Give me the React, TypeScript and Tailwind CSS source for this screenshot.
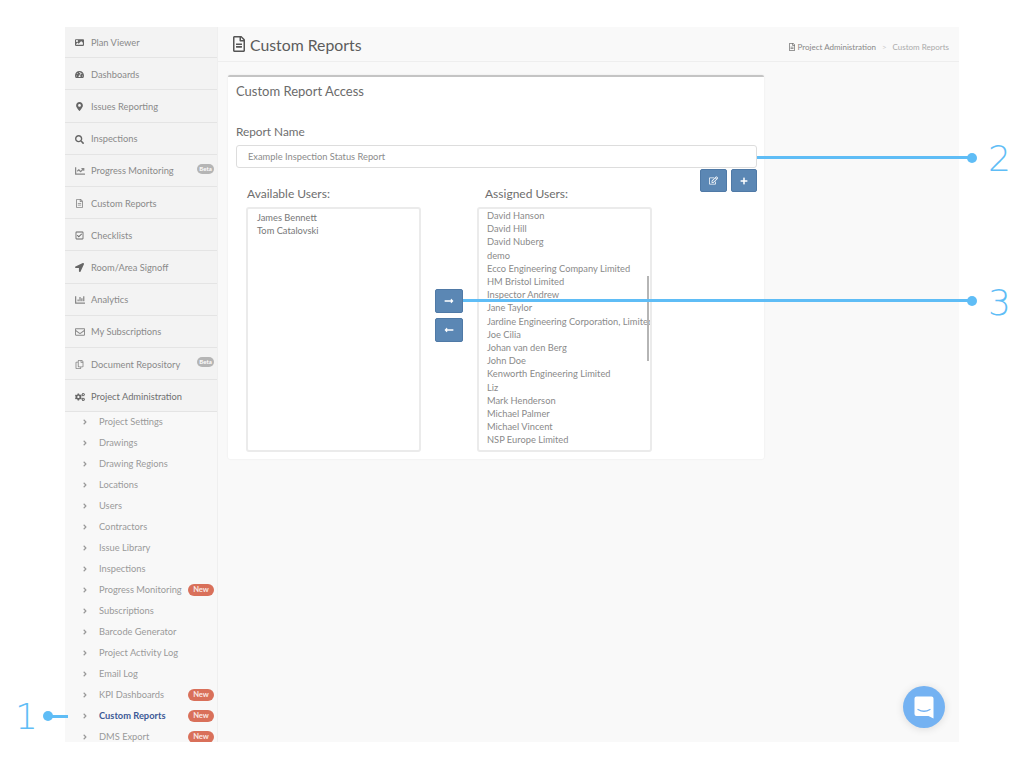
import type { ReactNode } from 'react';
import {
  FaImage,
  FaTachometerAlt,
  FaSearch,
  FaChartLine,
  FaRegFileAlt,
  FaRegCheckSquare,
  FaLocationArrow,
  FaChartBar,
  FaRegEnvelope,
  FaRegCopy,
  FaCogs,
  FaRegEdit,
  FaPlus,
  FaLongArrowAltRight,
  FaLongArrowAltLeft,
  FaAngleRight,
  FaMapMarkerAlt,
} from 'react-icons/fa';

const mainItems: { label: string; icon: ReactNode; beta?: boolean }[] = [
  { label: 'Plan Viewer', icon: <FaImage /> },
  { label: 'Dashboards', icon: <FaTachometerAlt /> },
  { label: 'Issues Reporting', icon: <FaMapMarkerAlt /> },
  { label: 'Inspections', icon: <FaSearch /> },
  { label: 'Progress Monitoring', icon: <FaChartLine className="text-[10px] text-[#888]" />, beta: true },
  { label: 'Custom Reports', icon: <FaRegFileAlt className="text-[#888]" /> },
  { label: 'Checklists', icon: <FaRegCheckSquare /> },
  { label: 'Room/Area Signoff', icon: <FaLocationArrow /> },
  { label: 'Analytics', icon: <FaChartBar className="text-[10px] text-[#888]" /> },
  { label: 'My Subscriptions', icon: <FaRegEnvelope className="text-[10px] text-[#888]" /> },
  { label: 'Document Repository', icon: <FaRegCopy className="text-[#888]" />, beta: true },
  { label: 'Project Administration', icon: <FaCogs className="text-[10px]" /> },
];

const subItems: { label: string; isNew?: boolean; active?: boolean }[] = [
  { label: 'Project Settings' },
  { label: 'Drawings' },
  { label: 'Drawing Regions' },
  { label: 'Locations' },
  { label: 'Users' },
  { label: 'Contractors' },
  { label: 'Issue Library' },
  { label: 'Inspections' },
  { label: 'Progress Monitoring', isNew: true },
  { label: 'Subscriptions' },
  { label: 'Barcode Generator' },
  { label: 'Project Activity Log' },
  { label: 'Email Log' },
  { label: 'KPI Dashboards', isNew: true },
  { label: 'Custom Reports', isNew: true, active: true },
  { label: 'DMS Export', isNew: true },
];

const assigned = [
  'David Hanson',
  'David Hill',
  'David Nuberg',
  'demo',
  'Ecco Engineering Company Limited',
  'HM Bristol Limited',
  'Inspector Andrew',
  'Jane Taylor',
  'Jardine Engineering Corporation, Limited',
  'Joe Cilia',
  'Johan van den Berg',
  'John Doe',
  'Kenworth Engineering Limited',
  'Liz',
  'Mark Henderson',
  'Michael Palmer',
  'Michael Vincent',
  'NSP Europe Limited',
];

function Sidebar() {
  return (
    <aside className="w-[153px] shrink-0 bg-[#f8f8f8] border-r border-[#efefef]">
      <div className="-mt-[1px]">
        {mainItems.map((item) => (
          <div
            key={item.label}
            className="h-[32.2px] pt-[2px] flex items-center bg-[#f3f3f3] border-b border-[#e4e4e4] pl-[10px] pr-[3px] text-[9.300px] text-[#8a8a8a] whitespace-nowrap"
          >
            <span className="w-[16px] text-[9px] text-[#666]">{item.icon}</span>
            <span className={item.label === 'Project Administration' ? 'text-[#6f6f6f]' : ''}>{item.label}</span>
            {item.beta && (
              <span className="ml-auto -mt-[4px] w-[17px] h-[10px] text-center rounded-full bg-[#b5b5b5] text-white text-[6px] leading-[10px] font-bold">
                Beta
              </span>
            )}
          </div>
        ))}
      </div>
      <div className="-mt-px">
        {subItems.map((item) => (
          <div key={item.label + (item.active ? '-active' : '')} className="h-[21px] flex items-center pl-[17px] pr-[3px] text-[9.300px] whitespace-nowrap">
            <FaAngleRight className="w-[6px] text-[8px] text-[#999] mr-[11px]" />
            <span className={item.active ? 'text-[#3d5a96] font-bold' : 'text-[#9a9a9a]'}>{item.label}</span>
            {item.isNew && (
              <span className="ml-auto w-[26px] h-[12px] text-center rounded-full bg-[#d9705a] text-[#fbe9e5] text-[7.5px] leading-[12px] font-bold">
                New
              </span>
            )}
          </div>
        ))}
      </div>
    </aside>
  );
}

function BlueButton({ children, className }: { children: ReactNode; className: string }) {
  return (
    <button className={`flex items-center justify-center rounded-[2px] bg-[#5b87b4] border border-[#4f79a6] text-white ${className}`}>
      {children}
    </button>
  );
}

function Panel() {
  return (
    <section className="w-[536px] h-[384px] bg-white border-t-2 border-[#c4c4c4] rounded-[2px] shadow-[0_0_2px_rgba(0,0,0,0.08)] px-[8px]">
      <h2 className="pt-[5px] text-[13px] leading-[18px] text-[#6b6b6b]">Custom Report Access</h2>
      <label className="block mt-[24px] text-[11.800px] leading-[16px] text-[#6e6e6e]">Report Name</label>
      <div className="mt-[5px] w-[521px] h-[23px] flex items-center border border-[#dddddd] rounded-[3px] pl-[11px] text-[9.300px] text-[#8c8c8c]">
        Example Inspection Status Report
      </div>
      <div className="mt-px w-[521px] flex justify-end gap-[4px]">
        <BlueButton className="w-[27px] h-[23px] text-[9px]">
          <FaRegEdit />
        </BlueButton>
        <BlueButton className="w-[26px] h-[23px] text-[8px]">
          <FaPlus />
        </BlueButton>
      </div>
      <div className="-mt-[6px] pl-[10px] flex">
        <div className="w-[175px]">
          <div className="text-[12px] leading-[16px] text-[#6e6e6e] pl-[1px]">Available Users:</div>
          <div className="mt-[5px] h-[245px] border-2 border-[#ebebeb] rounded-[3px] pl-[9px] pt-[2px] text-[9.300px] leading-[13.2px] text-[#777]">
            <div>James Bennett</div>
            <div>Tom Catalovski</div>
          </div>
        </div>
        <div className="w-[56px] pl-[14px] pt-[103px] flex flex-col gap-[5px]">
          <BlueButton className="w-[28px] h-[24px] text-[10px]">
            <FaLongArrowAltRight />
          </BlueButton>
          <BlueButton className="w-[28px] h-[24px] text-[10px]">
            <FaLongArrowAltLeft />
          </BlueButton>
        </div>
        <div className="w-[175px]">
          <div className="text-[12px] leading-[16px] text-[#6e6e6e] pl-[8px]">Assigned Users:</div>
          <div className="relative mt-[5px] h-[245px] border-2 border-[#ebebeb] rounded-[3px] pl-[8px] text-[9.300px] leading-[13.2px] text-[#8a8a8a] overflow-hidden whitespace-nowrap">
            {assigned.map((name) => (
              <div key={name}>{name}</div>
            ))}
            <div className="absolute right-[1px] top-[67px] w-[2px] h-[85px] bg-[#b5b5b5]" />
          </div>
        </div>
      </div>
    </section>
  );
}

function Annotations() {
  const digit = "absolute text-[36px] leading-[44px] font-extralight text-[#5fbdf6] font-['DejaVu_Sans',sans-serif]";
  return (
    <>
      <div className="absolute left-[43px] top-[711px] w-[10px] h-[10px] rounded-full bg-[#5fbdf6]" />
      <div className="absolute left-[48px] top-[714.5px] w-[20px] h-[3px] bg-[#5fbdf6]" />
      <span className={`${digit} left-[15px] top-[695px]`}>1</span>

      <div className="absolute left-[757px] top-[156px] w-[215px] h-[3px] bg-[#5fbdf6]" />
      <div className="absolute left-[967px] top-[152.5px] w-[10px] h-[10px] rounded-full bg-[#5fbdf6]" />
      <span className={`${digit} left-[988px] top-[137px]`}>2</span>

      <div className="absolute left-[463px] top-[299px] w-[509px] h-[3px] bg-[#5fbdf6]" />
      <div className="absolute left-[967px] top-[295.5px] w-[10px] h-[10px] rounded-full bg-[#5fbdf6]" />
      <span className={`${digit} left-[988px] top-[281px]`}>3</span>
    </>
  );
}

export default function App() {
  return (
    <div className="relative w-[1024px] h-[768px] bg-white overflow-hidden pt-[27px] pl-[65px] font-['Lato',sans-serif]">
      <div className="w-[894px] h-[715px] flex overflow-hidden bg-[#f9f9f9]">
        <Sidebar />
        <main className="flex-1 relative">
          <header className="h-[35px] flex items-center bg-[#f9f9f9] border-b border-[#eeeeee] pl-[13px] pr-[10px]">
            <FaRegFileAlt className="text-[16px] text-[#555]" />
            <h1 className="ml-[3px] mt-[1px] text-[15.800px] text-[#5c5c5c]">Custom Reports</h1>
            <div className="ml-auto mt-[5px] flex items-center text-[8px] text-[#aaa]">
              <FaRegFileAlt className="text-[8px] text-[#777] mr-[2px]" />
              <span className="text-[#888]">Project Administration</span>
              <span className="mx-[6px] text-[#ccc]">&gt;</span>
              <span>Custom Reports</span>
            </div>
          </header>
          <div className="pl-[10px] pt-[13px]">
            <Panel />
          </div>
          <div className="absolute left-[685px] top-[659px] w-[42px] h-[42px] rounded-full bg-[#74b2f2] flex items-center justify-center shadow-[0_1px_8px_rgba(0,0,0,0.12)]">
            <svg width="20" height="23" viewBox="0 0 20 23">
              <path d="M2.5 0.5h15a2 2 0 0 1 2 2v20l-5-2.5h-12a2 2 0 0 1-2-2v-15.500a2 2 0 0 1 2-2z" fill="#fff" />
              <path d="M4 13.500q6 3.500 12 0" fill="none" stroke="#74b2f2" strokeWidth="1.300" strokeLinecap="round" />
            </svg>
          </div>
        </main>
      </div>
      <Annotations />
    </div>
  );
}
